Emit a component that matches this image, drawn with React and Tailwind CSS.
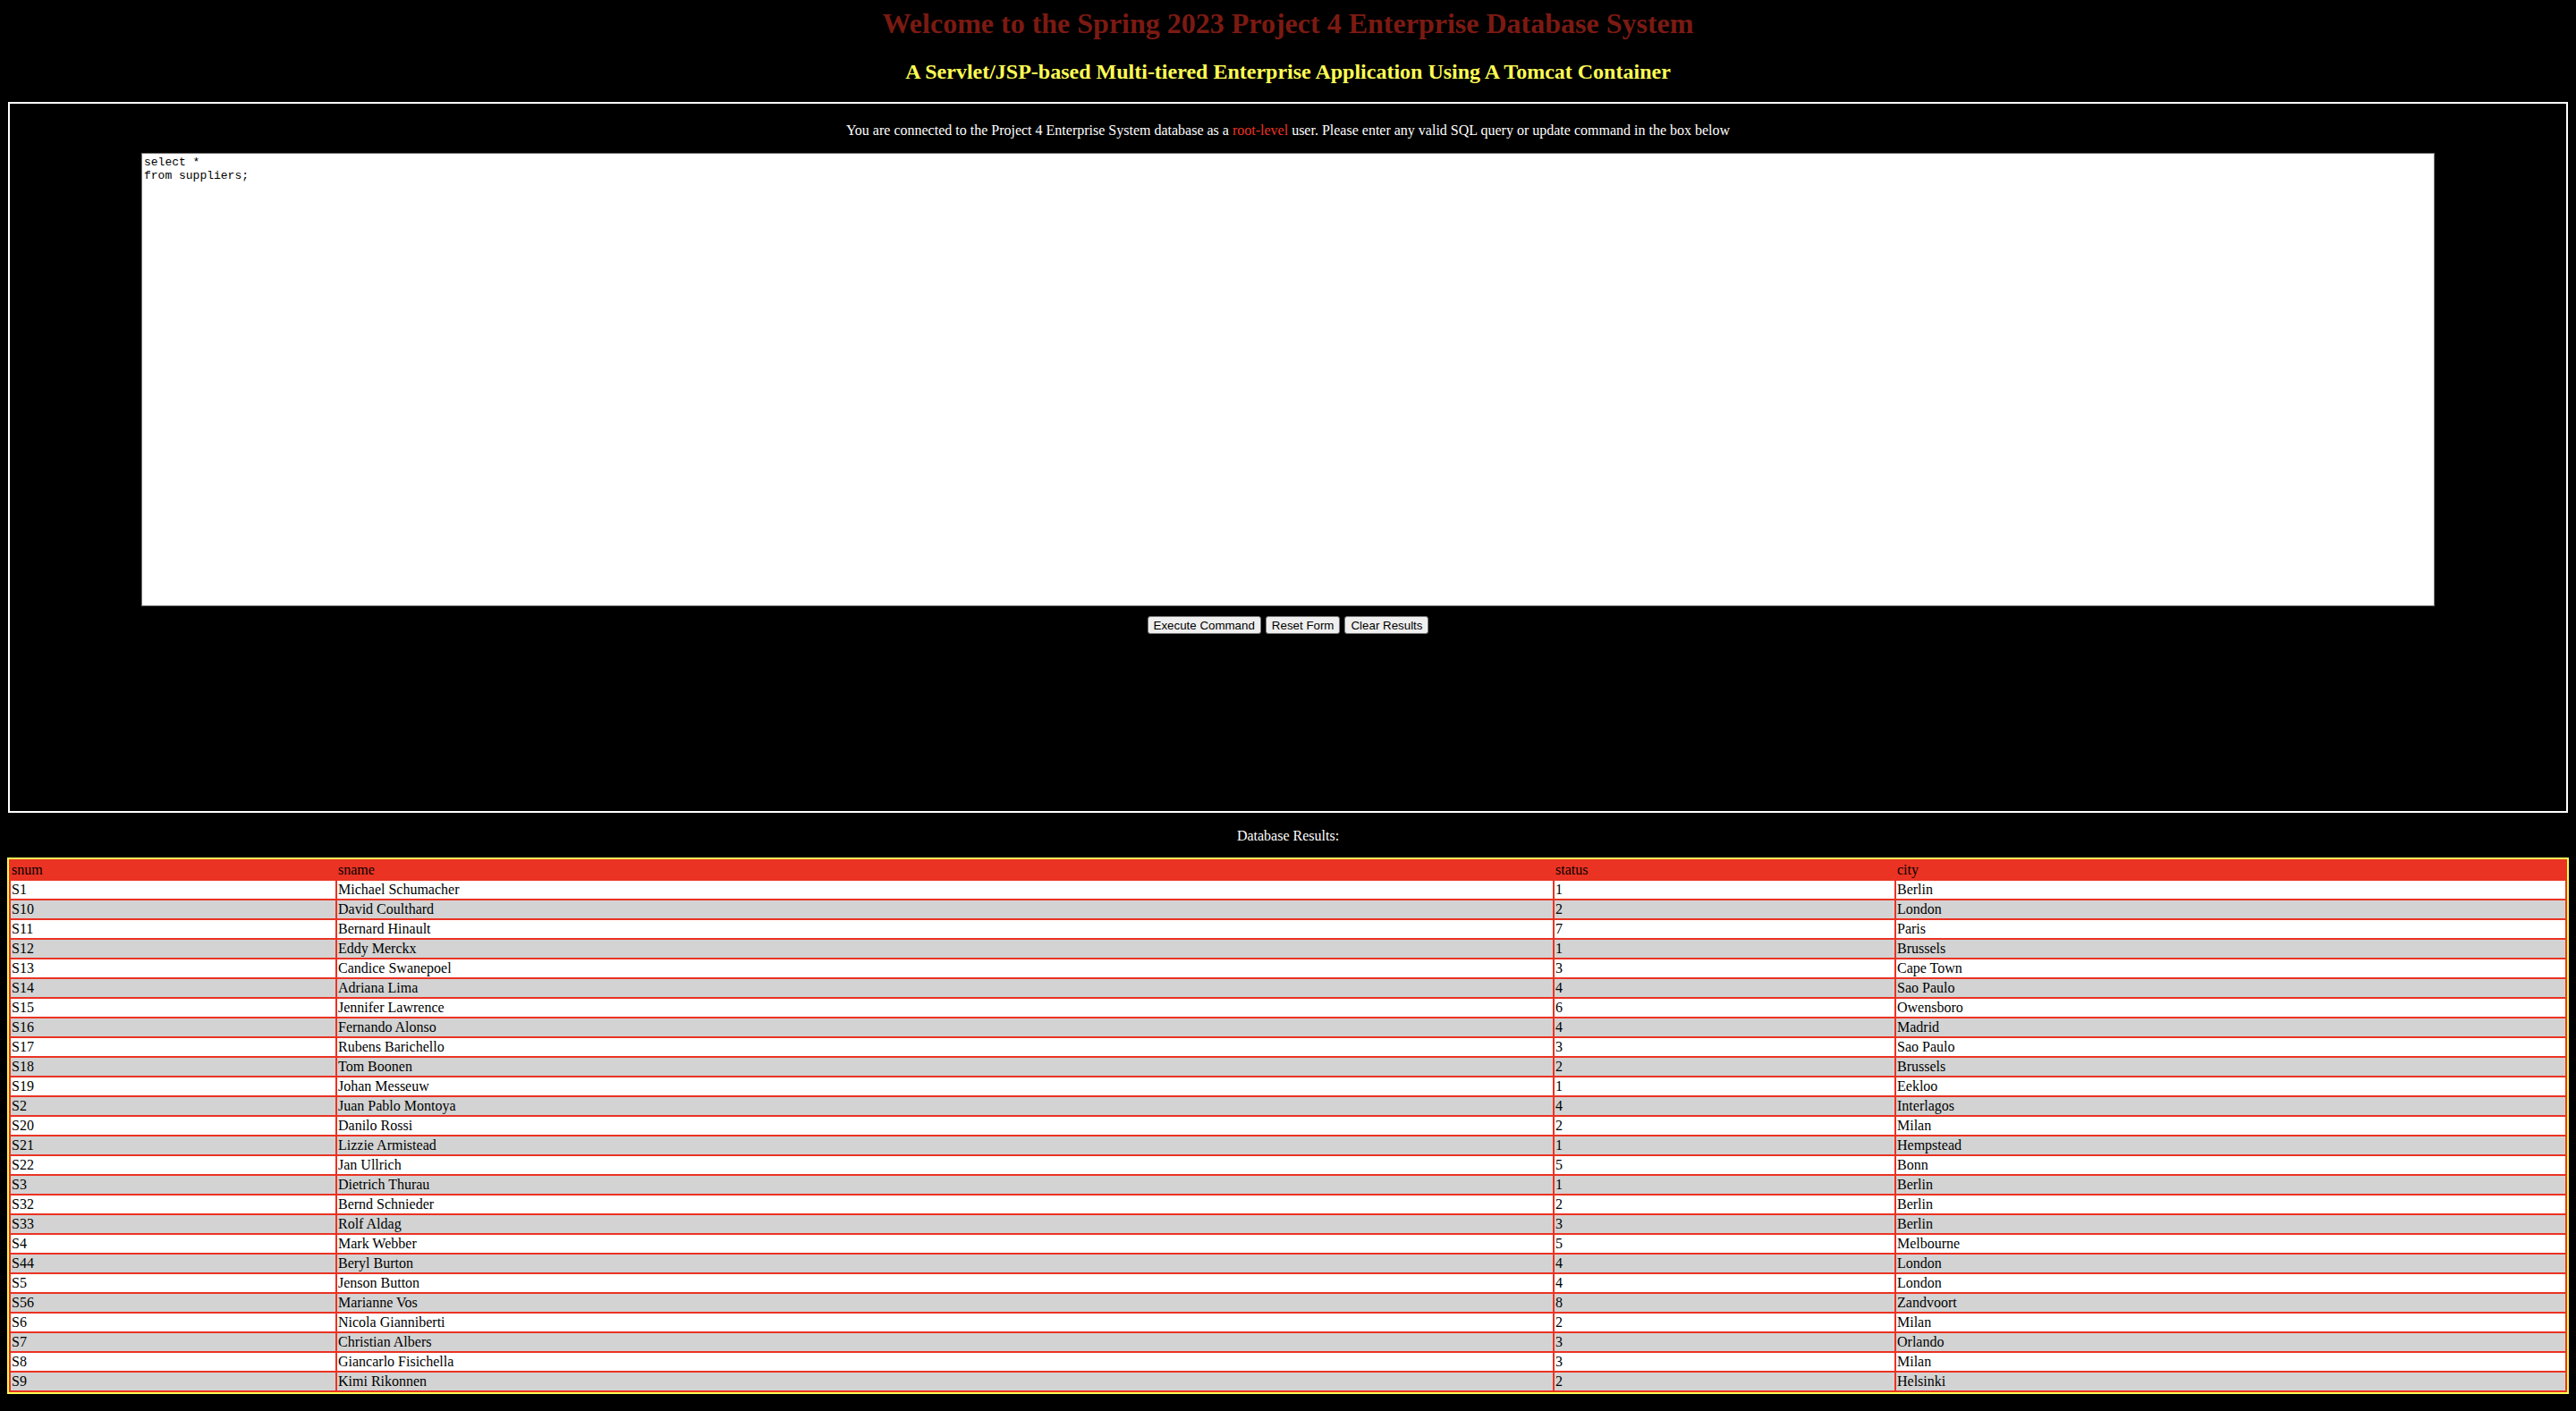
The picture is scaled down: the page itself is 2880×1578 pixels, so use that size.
import { useState } from "react";

const rows = [
    ["S1", "Michael Schumacher", "1", "Berlin"],
    ["S10", "David Coulthard", "2", "London"],
    ["S11", "Bernard Hinault", "7", "Paris"],
    ["S12", "Eddy Merckx", "1", "Brussels"],
    ["S13", "Candice Swanepoel", "3", "Cape Town"],
    ["S14", "Adriana Lima", "4", "Sao Paulo"],
    ["S15", "Jennifer Lawrence", "6", "Owensboro"],
    ["S16", "Fernando Alonso", "4", "Madrid"],
    ["S17", "Rubens Barichello", "3", "Sao Paulo"],
    ["S18", "Tom Boonen", "2", "Brussels"],
    ["S19", "Johan Messeuw", "1", "Eekloo"],
    ["S2", "Juan Pablo Montoya", "4", "Interlagos"],
    ["S20", "Danilo Rossi", "2", "Milan"],
    ["S21", "Lizzie Armistead", "1", "Hempstead"],
    ["S22", "Jan Ullrich", "5", "Bonn"],
    ["S3", "Dietrich Thurau", "1", "Berlin"],
    ["S32", "Bernd Schnieder", "2", "Berlin"],
    ["S33", "Rolf Aldag", "3", "Berlin"],
    ["S4", "Mark Webber", "5", "Melbourne"],
    ["S44", "Beryl Burton", "4", "London"],
    ["S5", "Jenson Button", "4", "London"],
    ["S56", "Marianne Vos", "8", "Zandvoort"],
    ["S6", "Nicola Gianniberti", "2", "Milan"],
    ["S7", "Christian Albers", "3", "Orlando"],
    ["S8", "Giancarlo Fisichella", "3", "Milan"],
    ["S9", "Kimi Rikonnen", "2", "Helsinki"],
];

const columns = ["snum", "sname", "status", "city"];

const App = () => {

    const [sql, setSql] = useState("select *\nfrom suppliers;");

    return (

        <div className="min-h-screen bg-black text-white font-['Liberation_Serif','Times_New_Roman',serif] text-center pt-[8px] pb-[8px]">

            <h1 className="text-[32px] leading-[36px] font-bold text-[#7b1a12]">
                Welcome to the Spring 2023 Project 4 Enterprise Database System
            </h1>

            <h2 className="mt-[22px] text-[24px] leading-[28px] font-bold text-[#fffd55]">
                A Servlet/JSP-based Multi-tiered Enterprise Application Using A Tomcat Container
            </h2>

            {/* Command box */}
            <div className="mx-[9px] mt-[20px] h-[795px] border-2 border-white flex flex-col items-center pt-[21px]">

                <p className="text-[16px] leading-[18px]">
                    You are connected to the Project 4 Enterprise System database as a{" "}
                    <span className="text-[#ea3323]">root-level</span>{" "}
                    user. Please enter any valid SQL query or update command in the box below
                </p>

                <textarea
                    value={sql}
                    onChange={(e) => setSql(e.target.value)}
                    className="mt-[16px] w-[2564px] h-[507px] bg-white text-black border border-[#767676] resize-none outline-none p-[2px] text-left text-[13px] leading-[15px] font-['Liberation_Mono','Courier_New',monospace]"
                />

                <div className="mt-[11px] flex gap-[5px] font-['Liberation_Sans',Arial,sans-serif] text-[13.33px] text-black">
                    <button className="h-[20px] px-[6px] bg-[#efefef] border border-[#767676] rounded-[3px]">
                        Execute Command
                    </button>
                    <button className="h-[20px] px-[6px] bg-[#efefef] border border-[#767676] rounded-[3px]">
                        Reset Form
                    </button>
                    <button className="h-[20px] px-[6px] bg-[#efefef] border border-[#767676] rounded-[3px]">
                        Clear Results
                    </button>
                </div>

            </div>

            <p className="mt-[17px] text-[16px] leading-[18px]">
                Database Results:
            </p>

            {/* Results table */}
            <div className="mx-[8px] mt-[15px] border-2 border-[#fffd55] bg-[#ea3323] p-[2px] grid grid-cols-[363px_1359px_380px_1fr] gap-[2px] text-left text-black text-[16px] leading-[20px]">

                {columns.map((col) => (
                    <div key={col} className="h-[20px] pl-[1px]">
                        {col}
                    </div>
                ))}

                {rows.map((row, i) =>
                    row.map((cell, j) => (
                        <div
                            key={`${i}-${j}`}
                            className={`h-[20px] pl-[1px] ${i % 2 === 0 ? "bg-white" : "bg-[#d3d3d3]"}`}
                        >
                            {cell}
                        </div>
                    ))
                )}

            </div>

        </div>
    );
};

export default App;
